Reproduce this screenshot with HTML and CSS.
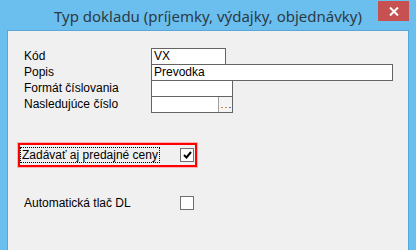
FILE: index.html
```html
<!DOCTYPE html>
<html>
<head>
    <meta charset="UTF-8">
    <title>Typ dokladu</title>
    <link rel="stylesheet" href="styles.css">
</head>
<body>
    <div class="window">
        <div class="titlebar">
            <span class="title">Typ dokladu (príjemky, výdajky, objednávky)</span>
            <button class="close" type="button" aria-label="Zavrieť">
                <svg width="10" height="9" viewBox="0 0 10 9">
                    <path d="M1 0.5 L9 8.5 M9 0.5 L1 8.5" stroke="#fff" stroke-width="2"/>
                </svg>
            </button>
        </div>
        <div class="client">
            <div class="form">
                <label class="field-label">Kód</label>
                <div class="box box-short">VX</div>

                <label class="field-label">Popis</label>
                <div class="box box-long">Prevodka</div>

                <label class="field-label">Formát číslovania</label>
                <div class="box box-mid"></div>

                <label class="field-label">Nasledujúce číslo</label>
                <div class="box box-mid box-picker">
                    <span class="picker-text"></span>
                    <span class="dots"><i class="dot orange"></i><i class="dot orange"></i><i class="dot blue"></i></span>
                </div>
            </div>

            <div class="check-row focused">
                <span class="check-label">Zadávať aj predajné ceny</span>
                <span class="checkbox">
                    <svg width="11" height="11" viewBox="0 0 11 11">
                        <path d="M2 5 L4.5 7.5 L9 2" fill="none" stroke="#000" stroke-width="2"/>
                    </svg>
                </span>
            </div>

            <div class="check-row plain">
                <span class="check-label">Automatická tlač DL</span>
                <span class="checkbox"></span>
            </div>
        </div>
    </div>
</body>
</html>
```

FILE: styles.css
```css
/* Dialog window, Windows 8 look */
body {
    margin: 0;
    font-family: "Liberation Sans", Arial, sans-serif;
    font-size: 12px;
}

.window {
    width: 416px;
    height: 250px;
    background-color: #6bbfef;
    display: flex;
    flex-direction: column;
    overflow: hidden;
    position: relative;
}

.titlebar {
    height: 30px;
    display: flex;
    align-items: center;
    justify-content: center;
}

.title {
    font-family: "Noto Sans", "Open Sans", sans-serif;
    font-size: 15px;
    color: #2d3a44;
    margin-top: 1px;
}

.close {
    position: absolute;
    top: 1px;
    right: 7px;
    width: 31px;
    height: 20px;
    border: none;
    padding: 0;
    background-color: #c75050;
    display: flex;
    align-items: center;
    justify-content: center;
}

.client {
    flex: 1;
    margin: 0 7px;
    border: 1px solid #5aa6d6;
    border-bottom: none;
    background-color: #f0f0f0;
    color: #000;
}

.form {
    display: grid;
    grid-template-columns: 127px auto;
    grid-auto-rows: 16px;
    padding: 17px 0 0 16px;
    height: 65px;
}

.field-label {
    line-height: 17px;
}

.box {
    box-sizing: border-box;
    height: 17px;
    border: 1px solid #646464;
    background-color: #fff;
    line-height: 15px;
    padding-left: 2px;
    justify-self: start;
}

.box-short {
    width: 75px;
}

.box-long {
    width: 242px;
}

.box-mid {
    width: 82px;
}

.box-picker {
    display: flex;
    padding-left: 0;
}

.picker-text {
    flex: 1;
}

.dots {
    width: 14px;
    border-left: 1px solid #a0a0a0;
    background-color: #f4f4f4;
    display: flex;
    align-items: flex-end;
    justify-content: center;
    gap: 2px;
    padding-bottom: 4px;
    box-sizing: border-box;
}

.dot {
    width: 2px;
    height: 1px;
}

.dot.orange {
    background-color: #e08a3c;
}

.dot.blue {
    background-color: #4a7cc0;
}

.check-row {
    display: flex;
    align-items: center;
}

.check-row.focused {
    box-sizing: border-box;
    width: 179px;
    height: 24px;
    margin: 30px 0 0 10px;
    border: 2px solid #ff0000;
    box-shadow: 0 0 0 1px #ffb0b0;
    padding-left: 1px;
}

.check-row.focused .check-label {
    outline: 1px dotted #000;
    outline-offset: 0;
    padding: 0 1px;
    line-height: 14px;
}

.check-row.focused .checkbox {
    margin-left: auto;
    margin-right: 1px;
}

.check-row.plain {
    margin: 29px 0 0 16px;
    height: 13px;
}

.check-row.plain .check-label {
    width: 156px;
}

.checkbox {
    box-sizing: border-box;
    width: 14px;
    height: 14px;
    border: 1px solid #707070;
    background-color: #fff;
    display: flex;
    align-items: center;
    justify-content: center;
}
```
